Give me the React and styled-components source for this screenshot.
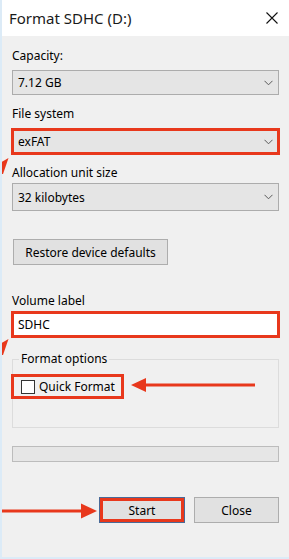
import React from 'react';
import styled, { createGlobalStyle } from 'styled-components';

const Global = createGlobalStyle`
  html, body { margin: 0; padding: 0; background: #f0f0f0; }
  body { font-family: "Noto Sans", "Open Sans", sans-serif; }
`;

const RED = '#e8381c';

const Window = styled.div`
  position: relative;
  width: 289px;
  height: 559px;
  box-sizing: border-box;
  background: #f0f0f0;
  border-left: 2px solid #dcebf7;
  border-bottom: 2px solid #dcebf7;
  display: flex;
  flex-direction: column;
  overflow: hidden;
`;

const TitleBar = styled.div`
  height: 35px;
  flex: none;
  background: #fff;
  display: flex;
  align-items: center;
  justify-content: space-between;
  padding: 0 11px 1px 7px;
`;

const Title = styled.span`
  font-size: 15px;
  color: #1a1a1a;
`;

const Body = styled.div`
  flex: 1;
  padding: 12px 10px 0 10px;
  display: flex;
  flex-direction: column;
`;

const Label = styled.div`
  font-size: 12px;
  line-height: 16px;
  color: #000;
  margin-top: ${p => p.$top || 0}px;
`;

const Combo = styled.div`
  height: ${p => p.$h || 25}px;
  box-sizing: border-box;
  margin-top: ${p => p.$top ?? 6}px;
  background: #e5e5e5;
  border: 1px solid #acacac;
  display: flex;
  align-items: center;
  justify-content: space-between;
  padding: 0 5px 0 5px;
  font-size: 12px;
  color: #000;
  outline: ${p => (p.$hl ? `3px solid ${RED}` : 'none')};
  outline-offset: -2px;
`;

const TextInput = styled.div`
  height: 25px;
  box-sizing: border-box;
  margin-top: 3px;
  background: #fff;
  border: 1px solid #7a7a7a;
  display: flex;
  align-items: center;
  padding: 0 5px;
  font-size: 12px;
  color: #000;
  outline: 3px solid ${RED};
  outline-offset: -2px;
`;

const Button = styled.div`
  height: 26px;
  box-sizing: border-box;
  width: ${p => p.$w}px;
  background: #e1e1e1;
  border: 1px solid ${p => (p.$default ? '#4a6a98' : '#adadad')};
  box-shadow: ${p => (p.$hl ? `inset 0 0 0 3px ${RED}` : 'none')};
  display: flex;
  align-items: center;
  justify-content: center;
  font-size: 12px;
  color: #000;
  margin-top: ${p => p.$top || 0}px;
  margin-left: ${p => p.$left || 0}px;
`;

const Group = styled.fieldset`
  margin: 14px 0 0 0;
  padding: 0;
  height: 77px;
  box-sizing: border-box;
  border: 1px solid #dcdcdc;
  min-width: 0;
`;

const Legend = styled.legend`
  font-size: 12px;
  line-height: 16px;
  padding: 0 2px;
  margin-left: 6px;
  color: #000;
`;

const CheckRow = styled.div`
  display: inline-flex;
  align-items: center;
  gap: 4px;
  height: 25px;
  box-sizing: border-box;
  margin: 7px 0 0 -2px;
  padding: 0 6px 0 7px;
  border: 3px solid ${RED};
  font-size: 12px;
  color: #000;
`;

const Box = styled.span`
  width: 14px;
  height: 14px;
  box-sizing: border-box;
  background: #fff;
  border: 1px solid #333;
`;

const Progress = styled.div`
  margin-top: 18px;
  height: 16px;
  box-sizing: border-box;
  border: 1px solid #bcbcbc;
  background: #e6e6e6;
`;

const ButtonRow = styled.div`
  display: flex;
  justify-content: flex-end;
  gap: 9px;
  margin-top: 35px;
`;

const Overlay = styled.svg`
  position: absolute;
  left: -2px;
  top: 0;
  pointer-events: none;
`;

const Chevron = () => (
  <svg width="9" height="6" viewBox="0 0 9 6">
    <path d="M0.5 0.8 L4.5 4.8 L8.5 0.8" fill="none" stroke="#5a5a5a" strokeWidth="1" />
  </svg>
);

const CloseIcon = () => (
  <svg width="12" height="12" viewBox="0 0 12 12">
    <path d="M0.5 0.5 L11.5 11.5 M11.5 0.5 L0.5 11.5" stroke="#111" strokeWidth="1.1" />
  </svg>
);

export default function App() {
  return (
    <Window>
      <Global />
      <TitleBar>
        <Title>Format SDHC (D:)</Title>
        <CloseIcon />
      </TitleBar>
      <Body>
        <Label>Capacity:</Label>
        <Combo>
          7.12 GB
          <Chevron />
        </Combo>
        <Label $top={11}>File system</Label>
        <Combo $hl $top={7}>
          exFAT
          <Chevron />
        </Combo>
        <Label $top={11}>Allocation unit size</Label>
        <Combo $h={28} $top={2}>
          32 kilobytes
          <Chevron />
        </Combo>
        <Button $w={155} $top={28} $left={1}>Restore device defaults</Button>
        <Label $top={28}>Volume label</Label>
        <TextInput>SDHC</TextInput>
        <Group>
          <Legend>Format options</Legend>
          <div>
            <CheckRow>
              <Box />
              Quick Format
            </CheckRow>
          </div>
        </Group>
        <Progress />
        <ButtonRow>
          <Button $w={86} $default $hl>Start</Button>
          <Button $w={85}>Close</Button>
        </ButtonRow>
      </Body>
      <Overlay width="289" height="559" viewBox="0 0 289 559">
        <polygon points="8.5,158 -4,165 0,174 3,174" fill={RED} />
        <polygon points="8.5,339 -4,346 0,355 3,355" fill={RED} />
        <rect x="143" y="383.5" width="112" height="3" fill={RED} />
        <polygon points="131,385 146,378 146,392" fill={RED} />
        <rect x="0" y="509.5" width="84" height="3" fill={RED} />
        <polygon points="97,511 81,503.5 81,518.5" fill={RED} />
      </Overlay>
    </Window>
  );
}
